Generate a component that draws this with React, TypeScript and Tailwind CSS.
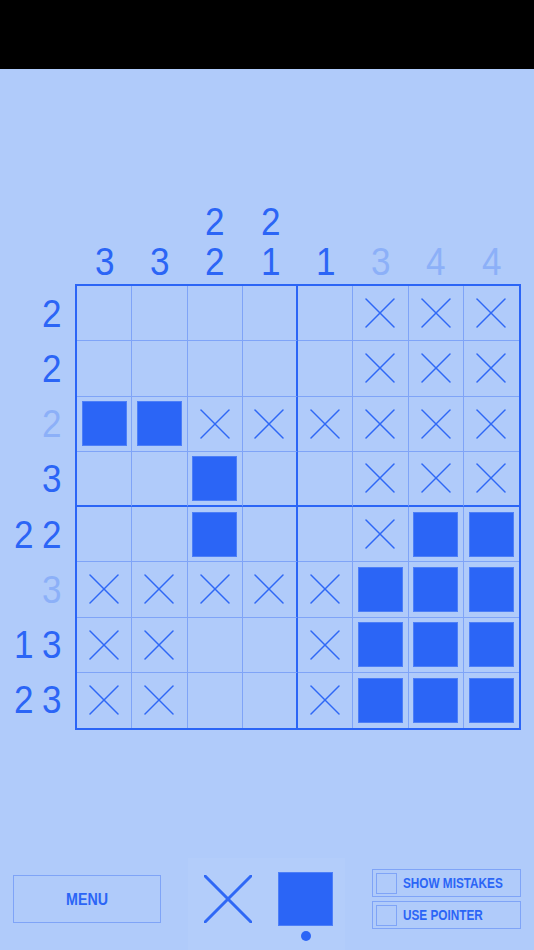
import clsx from 'clsx';

type Cell = 'F' | 'X' | '.';

interface Clue {
  readonly nums: number[];
  readonly done?: boolean;
}

const COL_CLUES: Clue[] = [
  { nums: [3] },
  { nums: [3] },
  { nums: [2, 2] },
  { nums: [2, 1] },
  { nums: [1] },
  { nums: [3], done: true },
  { nums: [4], done: true },
  { nums: [4], done: true },
];

const ROW_CLUES: Clue[] = [
  { nums: [2] },
  { nums: [2] },
  { nums: [2], done: true },
  { nums: [3] },
  { nums: [2, 2] },
  { nums: [3], done: true },
  { nums: [1, 3] },
  { nums: [2, 3] },
];

const BOARD: string[] = [
  '.....XXX',
  '.....XXX',
  'FFXXXXXX',
  '..F..XXX',
  '..F..XFF',
  'XXXXXFFF',
  'XX..XFFF',
  'XX..XFFF',
];

const FONT = { fontFamily: '"Liberation Sans", Arial, sans-serif' };

function CrossMark({ size, stroke }: { size: number; stroke: number }) {
  return (
    <svg width={size} height={size} viewBox={`0 0 ${size} ${size}`} className="block">
      <line x1={1} y1={1} x2={size - 1} y2={size - 1} stroke="#2f68f5" strokeWidth={stroke} strokeLinecap="round" />
      <line x1={size - 1} y1={1} x2={1} y2={size - 1} stroke="#2f68f5" strokeWidth={stroke} strokeLinecap="round" />
    </svg>
  );
}

function cellCls(r: number, c: number): string {
  return clsx(
    'flex items-center justify-center',
    c === 3 && 'border-r-2 border-r-[#2b65f6]',
    c !== 3 && c < 7 && 'border-r border-r-[#7fa4f7]',
    r === 3 && 'border-b-2 border-b-[#2b65f6]',
    r !== 3 && r < 7 && 'border-b border-b-[#7fa4f7]',
  );
}

function Checkbox({ label }: { label: string }) {
  return (
    <div className="flex items-center h-[28px] border border-[#7fa4f7] pl-[3px]">
      <div className="w-[21px] h-[21px] border border-[#7fa4f7] shrink-0" />
      <span className="ml-[6px] inline-block origin-left scale-x-[0.84] whitespace-nowrap text-[14px] font-bold text-[#2b65f6] leading-none">
        {label}
      </span>
    </div>
  );
}

export default function App() {
  return (
    <div className="w-[534px] h-[950px] bg-[#b0cbfa] flex flex-col overflow-hidden" style={FONT}>
      {/* status bar */}
      <div className="h-[69px] bg-black shrink-0" />

      {/* column clues */}
      <div className="mt-[133px] flex h-[80px]">
        <div className="w-[77px] shrink-0" />
        <div className="grid grid-cols-8 w-[442px]">
          {COL_CLUES.map((clue, i) => (
            <div
              key={i}
              className={clsx(
                'flex flex-col justify-end items-center text-[39px] leading-[40px]',
                clue.done ? 'text-[#8cb0f8]' : 'text-[#2b65f6]',
              )}
            >
              {clue.nums.map((n, j) => (
                <span key={j} className="inline-block scale-x-[0.9]">{n}</span>
              ))}
            </div>
          ))}
        </div>
      </div>

      {/* row clues + board */}
      <div className="mt-[2px] flex">
        <div className="w-[75px] shrink-0 pt-[2px] flex flex-col">
          {ROW_CLUES.map((clue, i) => (
            <div
              key={i}
              className={clsx(
                'h-[55.25px] flex items-center justify-end gap-[7px] pr-[12px] text-[39px] leading-[40px]',
                clue.done ? 'text-[#8cb0f8]' : 'text-[#2b65f6]',
              )}
            >
              {clue.nums.map((n, j) => (
                <span key={j} className="inline-block scale-x-[0.9]">{n}</span>
              ))}
            </div>
          ))}
        </div>
        <div className="w-[446px] h-[446px] border-2 border-[#2b65f6] grid grid-cols-8 grid-rows-8">
          {BOARD.flatMap((row, r) =>
            row.split('').map((ch, c) => {
              const v = ch as Cell;
              return (
                <div key={`${r}-${c}`} className={cellCls(r, c)}>
                  {v === 'F' && <div className="w-[45px] h-[45px] bg-[#2b65f6] border border-[#4d7ff7]" />}
                  {v === 'X' && <CrossMark size={30} stroke={1.5} />}
                </div>
              );
            }),
          )}
        </div>
      </div>

      {/* bottom controls */}
      <div className="mt-[128px] flex items-start h-[92px] shrink-0">
        <div className="ml-[13px] mt-[17px] w-[148px] h-[48px] border border-[#7fa4f7] flex items-center justify-center">
          <span className="inline-block scale-x-[0.84] text-[17px] font-bold text-[#2b65f6] leading-none">
            MENU
          </span>
        </div>

        <div className="ml-[27px] w-[157px] h-[92px] bg-[#b3cdfa] flex items-start">
          <div className="ml-[16px] mt-[17px]">
            <CrossMark size={48} stroke={3} />
          </div>
          <div className="ml-[26px] mt-[14px] flex flex-col items-center">
            <div className="w-[55px] h-[54px] bg-[#2b65f6] border border-[#4d7ff7]" />
            <div className="mt-[5px] w-[10px] h-[10px] rounded-full bg-[#2b65f6]" />
          </div>
        </div>

        <div className="ml-[27px] mt-[11px] w-[149px] flex flex-col gap-[4px]">
          <Checkbox label="SHOW MISTAKES" />
          <Checkbox label="USE POINTER" />
        </div>
      </div>
    </div>
  );
}
